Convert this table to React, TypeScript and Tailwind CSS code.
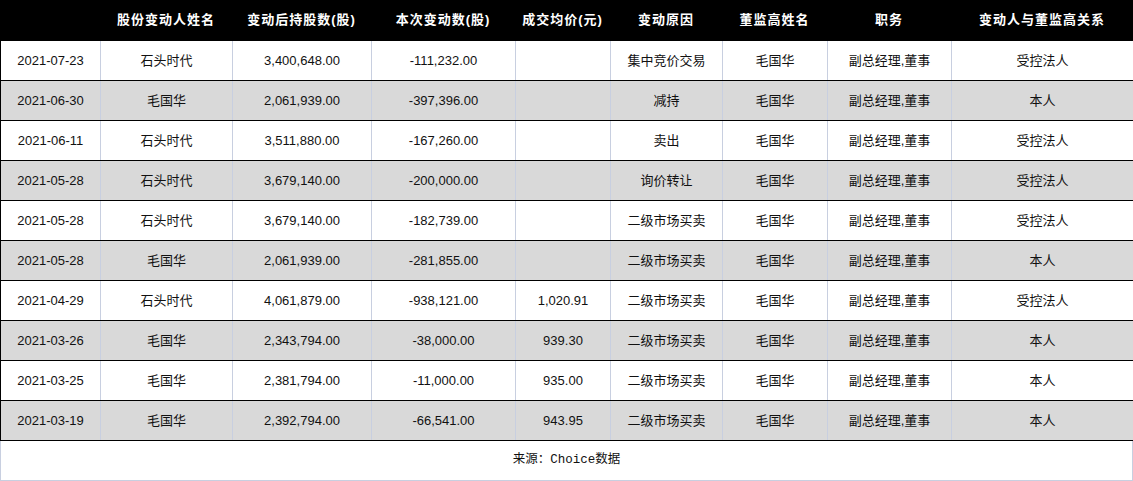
const cols = "grid grid-cols-[100px_132px_139px_144px_95px_112px_105px_124px_182px]";

const headers = [
  "",
  "股份变动人姓名",
  "变动后持股数(股)",
  "本次变动数(股)",
  "成交均价(元)",
  "变动原因",
  "董监高姓名",
  "职务",
  "变动人与董监高关系",
];

const rows = [
  ["2021-07-23", "石头时代", "3,400,648.00", "-111,232.00", "", "集中竞价交易", "毛国华", "副总经理,董事", "受控法人"],
  ["2021-06-30", "毛国华", "2,061,939.00", "-397,396.00", "", "减持", "毛国华", "副总经理,董事", "本人"],
  ["2021-06-11", "石头时代", "3,511,880.00", "-167,260.00", "", "卖出", "毛国华", "副总经理,董事", "受控法人"],
  ["2021-05-28", "石头时代", "3,679,140.00", "-200,000.00", "", "询价转让", "毛国华", "副总经理,董事", "受控法人"],
  ["2021-05-28", "石头时代", "3,679,140.00", "-182,739.00", "", "二级市场买卖", "毛国华", "副总经理,董事", "受控法人"],
  ["2021-05-28", "毛国华", "2,061,939.00", "-281,855.00", "", "二级市场买卖", "毛国华", "副总经理,董事", "本人"],
  ["2021-04-29", "石头时代", "4,061,879.00", "-938,121.00", "1,020.91", "二级市场买卖", "毛国华", "副总经理,董事", "受控法人"],
  ["2021-03-26", "毛国华", "2,343,794.00", "-38,000.00", "939.30", "二级市场买卖", "毛国华", "副总经理,董事", "本人"],
  ["2021-03-25", "毛国华", "2,381,794.00", "-11,000.00", "935.00", "二级市场买卖", "毛国华", "副总经理,董事", "本人"],
  ["2021-03-19", "毛国华", "2,392,794.00", "-66,541.00", "943.95", "二级市场买卖", "毛国华", "副总经理,董事", "本人"],
];

export default function App() {
  return (
    <div className="w-[1133px] h-[481px] bg-white text-[13px] text-[#111] font-['Liberation_Sans','Noto_Sans_CJK_SC',sans-serif]">
      <div className={`${cols} h-[40px] bg-black text-white font-bold tracking-[1px]`}>
        {headers.map((h, i) => (
          <div key={i} className="flex items-center justify-center">
            {h}
          </div>
        ))}
      </div>
      {rows.map((r, ri) => (
        <div
          key={ri}
          className={`${cols} h-[40px] border-t border-black border-l ${ri % 2 ? "bg-[#d9d9d9]" : "bg-white"} ${ri === rows.length - 1 ? "h-[41px] border-b" : ""}`}
        >
          {r.map((c, ci) => (
            <div key={ci} className="flex items-center justify-center border-r border-[#c8cfe0]">
              {c}
            </div>
          ))}
        </div>
      ))}
      <div className="h-[40px] flex items-center justify-center border-x border-b border-[#c8cfe0] font-['Liberation_Mono','Noto_Sans_CJK_SC',monospace] text-[12.5px]">
        来源：Choice数据
      </div>
    </div>
  );
}
